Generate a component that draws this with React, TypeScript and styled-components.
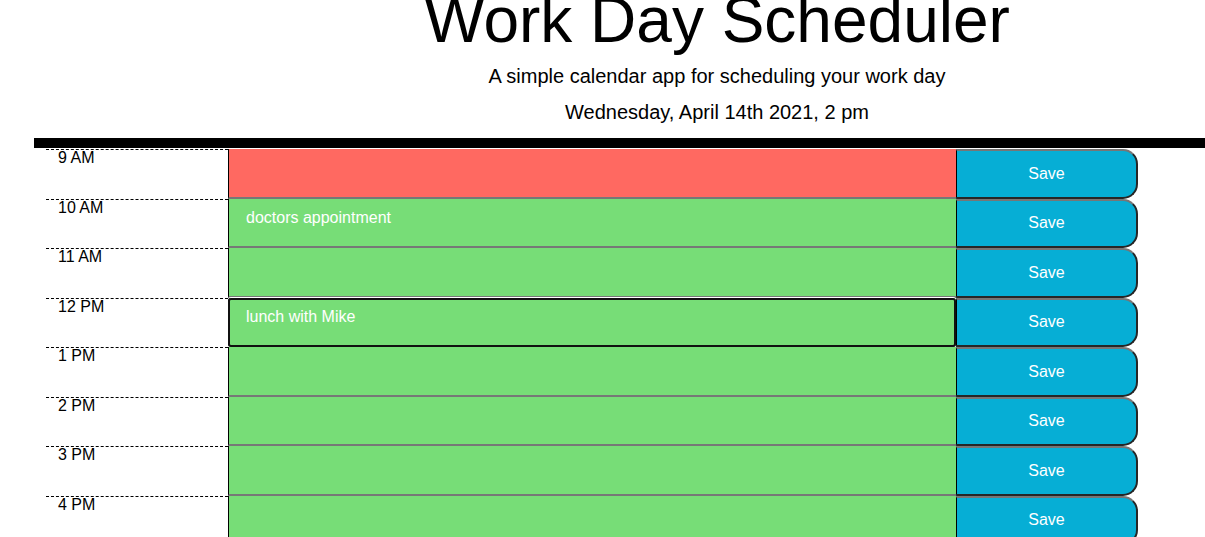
import React from "react";
import styled, { createGlobalStyle } from "styled-components";

const GlobalStyle = createGlobalStyle`
  html, body {
    margin: 0;
    padding: 0;
    overflow: hidden;
    background: #ffffff;
    font-family: "Liberation Sans", Arial, sans-serif;
    color: #000000;
  }
`;

const Page = styled.div`
  width: 1205px;
  overflow: hidden;
`;

const Header = styled.header`
  margin-left: 34px;
  width: 1366px;
  text-align: center;
  padding-bottom: 11px;
  border-bottom: 10px solid #000000;
`;

const Title = styled.h1`
  margin: -18px 0 0;
  font-size: 64px;
  line-height: 77px;
  font-weight: 400;
`;

const Lead = styled.p<{ $gap: number }>`
  margin: ${(p) => p.$gap}px 0 0;
  font-size: 20px;
  line-height: 30px;
`;

const Schedule = styled.main`
  margin-top: 1px;
  padding-left: 46px;
  display: flex;
  flex-direction: column;
`;

const Row = styled.div`
  display: grid;
  grid-template-columns: 182px 728px 182px;
  height: 49.5px;
`;

const Hour = styled.div`
  border-top: 1px dashed #000000;
  padding-left: 12px;
  font-size: 16px;
  line-height: 16px;
`;

const Entry = styled.textarea<{ $state: "present" | "future"; $focused?: boolean }>`
  box-sizing: border-box;
  display: block;
  margin: 0;
  height: 100%;
  width: 100%;
  border: none;
  border-left: 1px solid #000000;
  border-bottom: 2px solid #777777;
  padding: 10px 17px 0;
  resize: none;
  overflow: hidden;
  background: ${(p) => (p.$state === "present" ? "#ff6961" : "#77dd77")};
  color: #ffffff;
  font-family: "Liberation Sans", Arial, sans-serif;
  font-size: 16px;
  line-height: normal;
  outline: ${(p) => (p.$focused ? "2px solid #111111" : "none")};
  outline-offset: -2px;
  border-radius: ${(p) => (p.$focused ? "3px" : "0")};
  box-shadow: ${(p) => (p.$focused ? "0 -1px 0 #ffffff" : "none")};
`;

const SaveButton = styled.button`
  box-sizing: border-box;
  height: 100%;
  margin: 0;
  padding: 0;
  border-left: 1px solid #000000;
  border-top: 2px solid #767676;
  border-right: 2px solid #262626;
  border-bottom: 2px solid #262626;
  border-radius: 0 15px 15px 0;
  background: #06aed5;
  color: #ffffff;
  font-family: "Liberation Sans", Arial, sans-serif;
  font-size: 16px;
  cursor: pointer;
`;

type Slot = { label: string; text: string; state: "present" | "future"; focused?: boolean };

const slots: Slot[] = [
  { label: "9 AM", text: "", state: "present" },
  { label: "10 AM", text: "doctors appointment", state: "future" },
  { label: "11 AM", text: "", state: "future" },
  { label: "12 PM", text: "lunch with Mike", state: "future", focused: true },
  { label: "1 PM", text: "", state: "future" },
  { label: "2 PM", text: "", state: "future" },
  { label: "3 PM", text: "", state: "future" },
  { label: "4 PM", text: "", state: "future" },
  { label: "5 PM", text: "", state: "future" },
];

export default function App() {
  return (
    <Page>
      <GlobalStyle />
      <Header>
        <Title>Work Day Scheduler</Title>
        <Lead $gap={2}>A simple calendar app for scheduling your work day</Lead>
        <Lead $gap={6}>Wednesday, April 14th 2021, 2 pm</Lead>
      </Header>
      <Schedule>
        {slots.map((s) => (
          <Row key={s.label}>
            <Hour>{s.label}</Hour>
            <Entry defaultValue={s.text} $state={s.state} $focused={s.focused} />
            <SaveButton>Save</SaveButton>
          </Row>
        ))}
      </Schedule>
    </Page>
  );
}
